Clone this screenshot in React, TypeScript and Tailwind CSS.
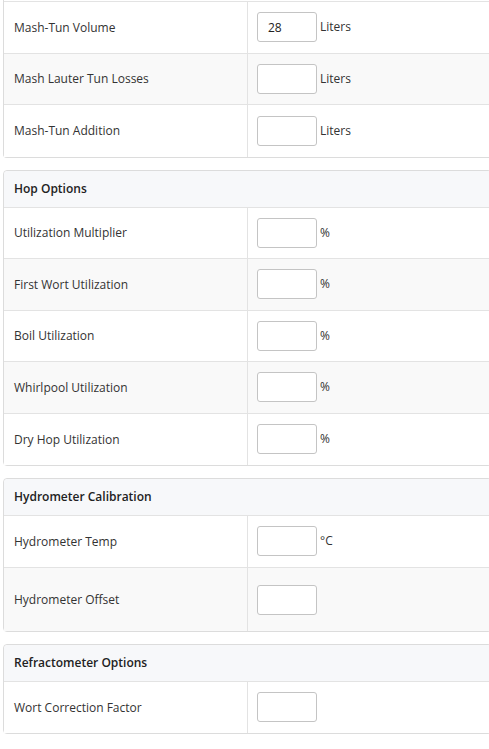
import React from "react";

interface IRow {
  label: string;
  value?: string;
  unit?: string;
  tall?: boolean;
}

interface ISection {
  title?: string;
  rows: IRow[];
}

const sections: ISection[] = [
  {
    rows: [
      { label: "Mash-Tun Volume", value: "28", unit: "Liters" },
      { label: "Mash Lauter Tun Losses", unit: "Liters" },
      { label: "Mash-Tun Addition", unit: "Liters" }
    ]
  },
  {
    title: "Hop Options",
    rows: [
      { label: "Utilization Multiplier", unit: "%" },
      { label: "First Wort Utilization", unit: "%" },
      { label: "Boil Utilization", unit: "%" },
      { label: "Whirlpool Utilization", unit: "%" },
      { label: "Dry Hop Utilization", unit: "%" }
    ]
  },
  {
    title: "Hydrometer Calibration",
    rows: [
      { label: "Hydrometer Temp", unit: "°C" },
      { label: "Hydrometer Offset", tall: true }
    ]
  },
  {
    title: "Refractometer Options",
    rows: [{ label: "Wort Correction Factor" }]
  }
];

const SettingRow: React.FC<{ row: IRow; index: number; last: boolean }> = ({
  row,
  index,
  last
}) => (
  <div
    className={
      "grid grid-cols-[244px_1fr] " +
      (row.tall ? "h-[63px] " : "h-[51.5px] ") +
      (index % 2 === 1 ? "bg-[#f9f9f9] " : "bg-white ") +
      (last ? "" : "border-b border-[#e3e3e3]")
    }
  >
    <div className="flex items-center pl-[10px] pt-[1px] border-r border-[#e3e3e3] text-[12px] text-[#333]">
      {row.label}
    </div>
    <div className={"flex items-center pl-[9px] " + (row.tall ? "pt-[2px]" : "")}>
      <input
        type="text"
        defaultValue={row.value}
        className="w-[60px] h-[30px] rounded-[3px] border border-[#c4c4c4] bg-white px-[10px] text-[12px] text-[#222] outline-none"
      />
      {row.unit && (
        <span className="ml-[3px] text-[12px] text-[#333]">{row.unit}</span>
      )}
    </div>
  </div>
);

const Section: React.FC<{ section: ISection; first: boolean }> = ({
  section,
  first
}) => (
  <div
    className={
      "w-[489px] bg-white border border-[#dcdcdc] " +
      (first ? "border-t-0 rounded-b-[4px]" : "rounded-[4px] mt-[12px]")
    }
  >
    {first && <div className="h-[2px] border-b border-[#e3e3e3]" />}
    {section.title && (
      <div className="h-[37px] flex items-center pl-[10px] bg-[#f7f8fa] border-b border-[#e3e3e3] text-[12px] font-semibold text-[#222] rounded-t-[4px]">
        {section.title}
      </div>
    )}
    {section.rows.map((row, i) => (
      <SettingRow
        key={row.label}
        row={row}
        index={i}
        last={i === section.rows.length - 1}
      />
    ))}
  </div>
);

const App: React.FC = () => {
  return (
    <div
      className="w-[489px] h-[749px] overflow-hidden bg-white pl-[3px]"
      style={{ fontFamily: '"Open Sans", "Liberation Sans", sans-serif' }}
    >
      {sections.map((s, i) => (
        <Section key={i} section={s} first={i === 0} />
      ))}
    </div>
  );
};

export default App;
